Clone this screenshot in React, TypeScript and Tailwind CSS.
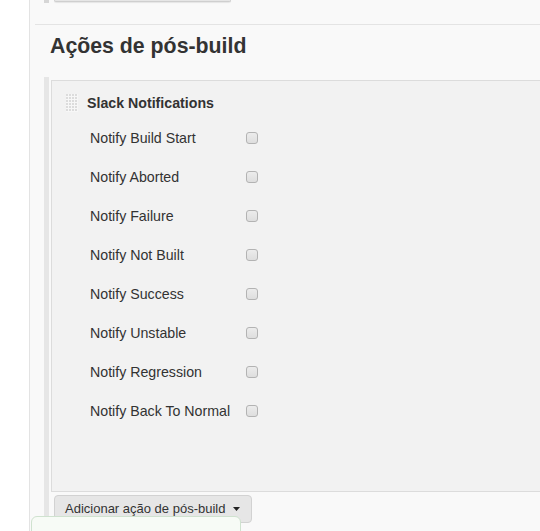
const notifications = [
  "Notify Build Start",
  "Notify Aborted",
  "Notify Failure",
  "Notify Not Built",
  "Notify Success",
  "Notify Unstable",
  "Notify Regression",
  "Notify Back To Normal",
];

function DragHandle() {
  const dots = [];
  for (let r = 0; r < 6; r++) {
    for (let c = 0; c < 4; c++) {
      dots.push(<rect key={`${r}-${c}`} x={c * 3} y={r * 3} width="2" height="2" fill="#dcdcdc" />);
    }
  }
  return (
    <svg width="12" height="18" viewBox="0 0 12 18" className="shrink-0">
      <rect x="0" y="0" width="12" height="18" fill="#f7f7f7" />
      {dots}
    </svg>
  );
}

export default function App() {
  return (
    <div
      className="relative flex h-[531px] w-[540px] overflow-hidden bg-white text-[#333]"
      style={{ fontFamily: '"Liberation Sans", Arial, sans-serif' }}
    >
      <div className="w-[30px] shrink-0 border-r border-[#e3e3e3]" />

      <div className="flex flex-1 flex-col bg-[#f9f9f9]">
        {/* tail of previous section */}
        <div className="flex h-[24px] shrink-0 items-start">
          <div className="ml-[14px] h-[3px] w-[5px] bg-[#d6d6d6]" />
          <div className="ml-[5px] h-[2px] w-[177px] rounded-b-[3px] border-x border-b border-[#cfcfcf] bg-[#e6e6e6] shadow-[0_1px_1px_rgba(0,0,0,0.08)]" />
        </div>
        <div className="ml-[5px] shrink-0 border-t border-[#e4e4e4]" />

        <h2 className="mt-[9px] shrink-0 pl-[20px] text-[21.3px] leading-[24px] font-bold text-[#333]">
          Ações de pós-build
        </h2>

        <div className="mt-[19px] ml-[14px] shrink-0 border-l-[5px] border-[#e6e6e6] pt-[3px] pl-[2px]">
          <div className="border-y border-l border-[#dcdcdc] bg-[#f2f2f2] pt-[13px] pb-[61px]">
            <div className="flex h-[18px] items-center pl-[14px]">
              <DragHandle />
              <span className="ml-[9px] text-[14.2px] leading-[16px] font-bold">Slack Notifications</span>
            </div>
            <div className="mt-[6px] flex flex-col">
              {notifications.map((label) => (
                <div key={label} className="grid h-[39px] grid-cols-[156px_auto] items-center pl-[38px]">
                  <span className="text-[14.2px] leading-[16px]">{label}</span>
                  <span className="h-[12px] w-[12px] rounded-[3px] border border-[#b3b3b3] bg-gradient-to-b from-[#ececec] to-[#dedede]" />
                </div>
              ))}
            </div>
          </div>

          <div className="pt-[3px] pb-[10px] pl-[3px]">
            <button
              type="button"
              className="flex h-[28px] items-center rounded-[4px] border border-[#d2d2d2] bg-[#e6e6e6] pr-[11px] pl-[10px] text-[13px] text-[#333]"
            >
              Adicionar ação de pós-build
              <svg width="7" height="4" viewBox="0 0 7 4" className="ml-[8px]">
                <path d="M0 0h7L3.5 4z" fill="#222" />
              </svg>
            </button>
          </div>
        </div>
      </div>

      <div className="absolute top-[516px] left-[31px] h-[40px] w-[210px] rounded-t-[6px] border border-[#cfe2cf] bg-[#f7fbf6]" />
    </div>
  );
}
